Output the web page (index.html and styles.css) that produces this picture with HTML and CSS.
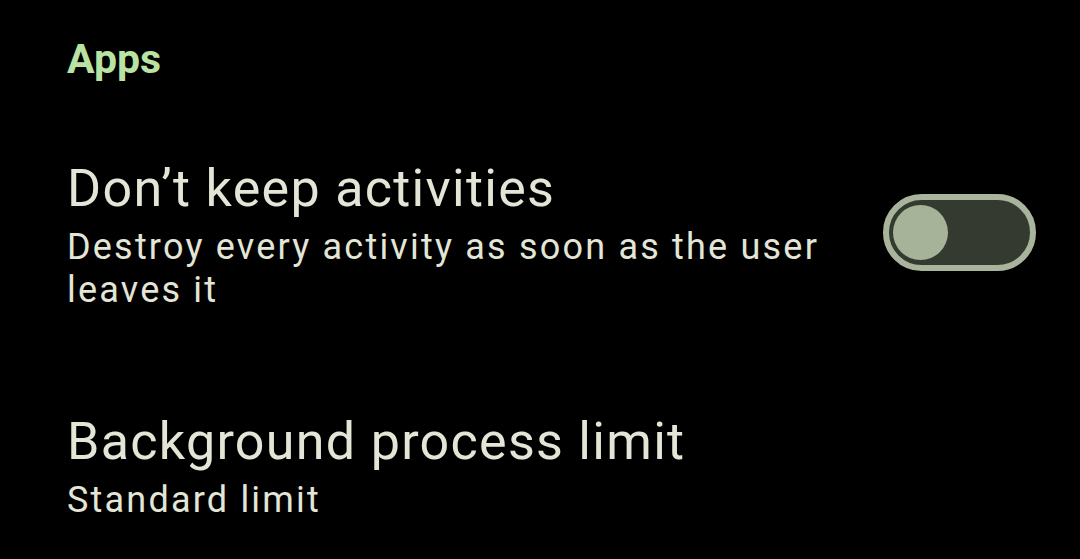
FILE: index.html
```html
<!DOCTYPE html>
<html lang="en">
<head>
  <meta charset="UTF-8" />
  <meta name="viewport" content="width=device-width, initial-scale=1.0" />
  <title>Developer options</title>
  <link rel="stylesheet" href="styles.css">
</head>
<body>
  <div class="screen">
    <div class="category">Apps</div>

    <div class="pref">
      <div class="pref-text">
        <div class="pref-title">Don’t keep activities</div>
        <div class="pref-summary">Destroy every activity as soon as the user leaves it</div>
      </div>
      <div class="switch">
        <div class="thumb"></div>
      </div>
    </div>

    <div class="pref pref-last">
      <div class="pref-text">
        <div class="pref-title">Background process limit</div>
        <div class="pref-summary">Standard limit</div>
      </div>
    </div>
  </div>
</body>
</html>
```

FILE: styles.css
```css
* {
  margin: 0;
  padding: 0;
  box-sizing: border-box;
  font-family: Roboto, 'Noto Sans', sans-serif;
}

html, body {
  height: 100%;
  background: #000;
}

.screen {
  padding: 35px 44px 0 67px;
  color: #e3e5d6;
}

.category {
  font-size: 41px;
  font-weight: 700;
  color: #b9e3a3;
  line-height: 48px;
}

.pref {
  display: flex;
  align-items: center;
  gap: 40px;
  margin-top: 76px;
}

.pref-last {
  margin-top: 100px;
}

.pref-text {
  flex: 1;
}

.pref-title {
  font-size: 52px;
  line-height: 60px;
  letter-spacing: 1.3px;
}

.pref-summary {
  margin-top: 7px;
  font-size: 36px;
  line-height: 43px;
  letter-spacing: 2.2px;
}

.switch {
  width: 153px;
  height: 77px;
  margin-bottom: 6px;
  border: 6px solid #a8b49b;
  border-radius: 40px;
  background: #343a2f;
  display: flex;
  align-items: center;
  padding-left: 4px;
}

.thumb {
  width: 55px;
  height: 55px;
  border-radius: 50%;
  background: #a7b398;
}
```
